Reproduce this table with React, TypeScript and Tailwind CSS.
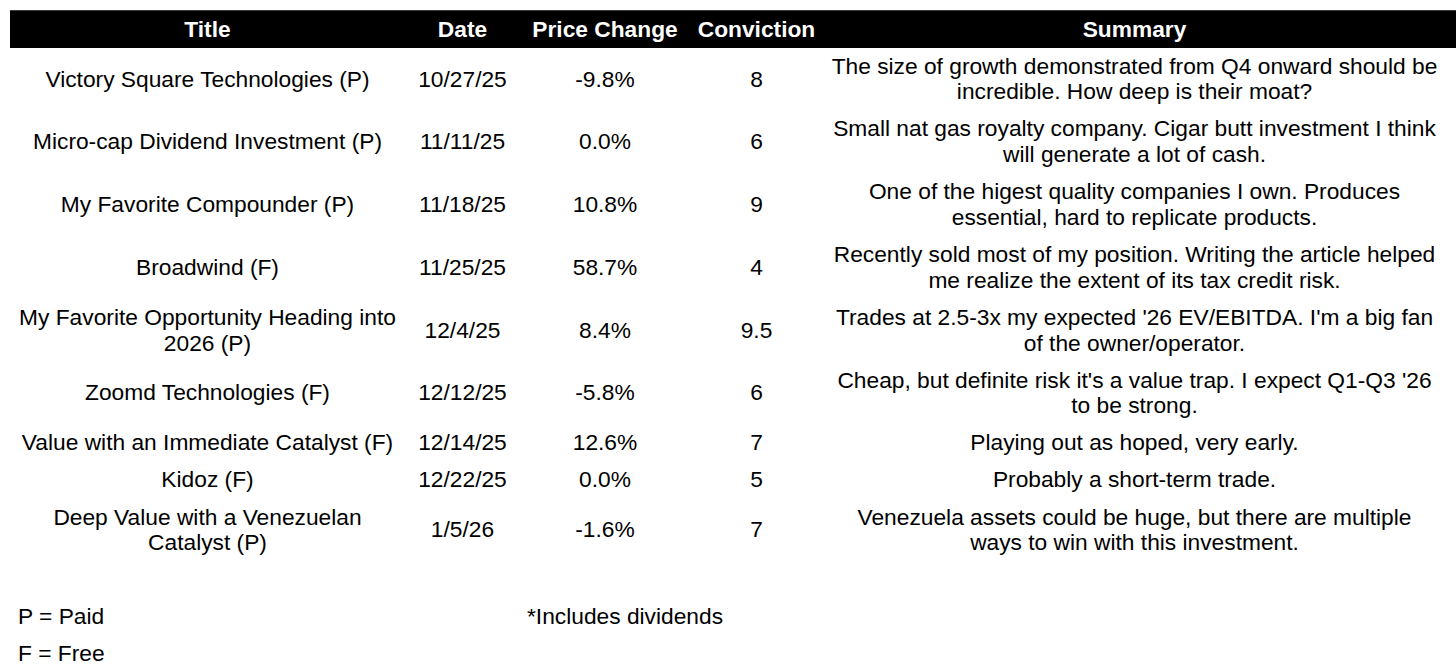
import React from 'react';

interface Pick {
  title: string[];
  date: string;
  change: string;
  conviction: string;
  summary: string[];
}

const picks: Pick[] = [
  {
    title: ['Victory Square Technologies (P)'],
    date: '10/27/25',
    change: '-9.8%',
    conviction: '8',
    summary: ['The size of growth demonstrated from Q4 onward should be', 'incredible. How deep is their moat?'],
  },
  {
    title: ['Micro-cap Dividend Investment (P)'],
    date: '11/11/25',
    change: '0.0%',
    conviction: '6',
    summary: ['Small nat gas royalty company. Cigar butt investment I think', 'will generate a lot of cash.'],
  },
  {
    title: ['My Favorite Compounder (P)'],
    date: '11/18/25',
    change: '10.8%',
    conviction: '9',
    summary: ['One of the higest quality companies I own. Produces', 'essential, hard to replicate products.'],
  },
  {
    title: ['Broadwind (F)'],
    date: '11/25/25',
    change: '58.7%',
    conviction: '4',
    summary: ['Recently sold most of my position. Writing the article helped', 'me realize the extent of its tax credit risk.'],
  },
  {
    title: ['My Favorite Opportunity Heading into', '2026 (P)'],
    date: '12/4/25',
    change: '8.4%',
    conviction: '9.5',
    summary: ["Trades at 2.5-3x my expected '26 EV/EBITDA. I'm a big fan", 'of the owner/operator.'],
  },
  {
    title: ['Zoomd Technologies (F)'],
    date: '12/12/25',
    change: '-5.8%',
    conviction: '6',
    summary: ["Cheap, but definite risk it's a value trap. I expect Q1-Q3 '26", 'to be strong.'],
  },
  {
    title: ['Value with an Immediate Catalyst (F)'],
    date: '12/14/25',
    change: '12.6%',
    conviction: '7',
    summary: ['Playing out as hoped, very early.'],
  },
  {
    title: ['Kidoz (F)'],
    date: '12/22/25',
    change: '0.0%',
    conviction: '5',
    summary: ['Probably a short-term trade.'],
  },
  {
    title: ['Deep Value with a Venezuelan', 'Catalyst (P)'],
    date: '1/5/26',
    change: '-1.6%',
    conviction: '7',
    summary: ['Venezuela assets could be huge, but there are multiple', 'ways to win with this investment.'],
  },
];

const headers = ['Title', 'Date', 'Price Change', 'Conviction', 'Summary'];

const cols = 'grid grid-cols-[395px_115px_170px_133px_623px]';

function Cell({ lines }: { lines: string[] }) {
  return (
    <div className="flex flex-col items-center justify-center py-[5.7px] text-center">
      {lines.map((line, i) => (
        <span key={i} className="block whitespace-nowrap">
          {line}
        </span>
      ))}
    </div>
  );
}

export default function App() {
  return (
    <div
      className="min-h-[672px] w-[1456px] bg-white pt-[10px] pl-[10px] text-[22.75px] leading-[25.7px] text-black"
      style={{ fontFamily: '"Liberation Sans", Arial, sans-serif' }}
    >
      <div className={`${cols} h-[38px] border-t border-[#3a3a3a] bg-black font-bold text-white`}>
        {headers.map((h) => (
          <div key={h} className="flex items-center justify-center whitespace-nowrap">
            {h}
          </div>
        ))}
      </div>

      {picks.map((p) => (
        <div key={p.date} className={cols}>
          <Cell lines={p.title} />
          <Cell lines={[p.date]} />
          <Cell lines={[p.change]} />
          <Cell lines={[p.conviction]} />
          <Cell lines={p.summary} />
        </div>
      ))}

      <div className="h-[37px]" />

      <div className={`${cols} h-[37px]`}>
        <div className="flex items-center pl-[8px]">P = Paid</div>
        <div />
        <div className="flex items-center pl-[7px] whitespace-nowrap">*Includes dividends</div>
      </div>
      <div className={`${cols} h-[37px]`}>
        <div className="flex items-center pl-[8px]">F = Free</div>
      </div>
    </div>
  );
}
